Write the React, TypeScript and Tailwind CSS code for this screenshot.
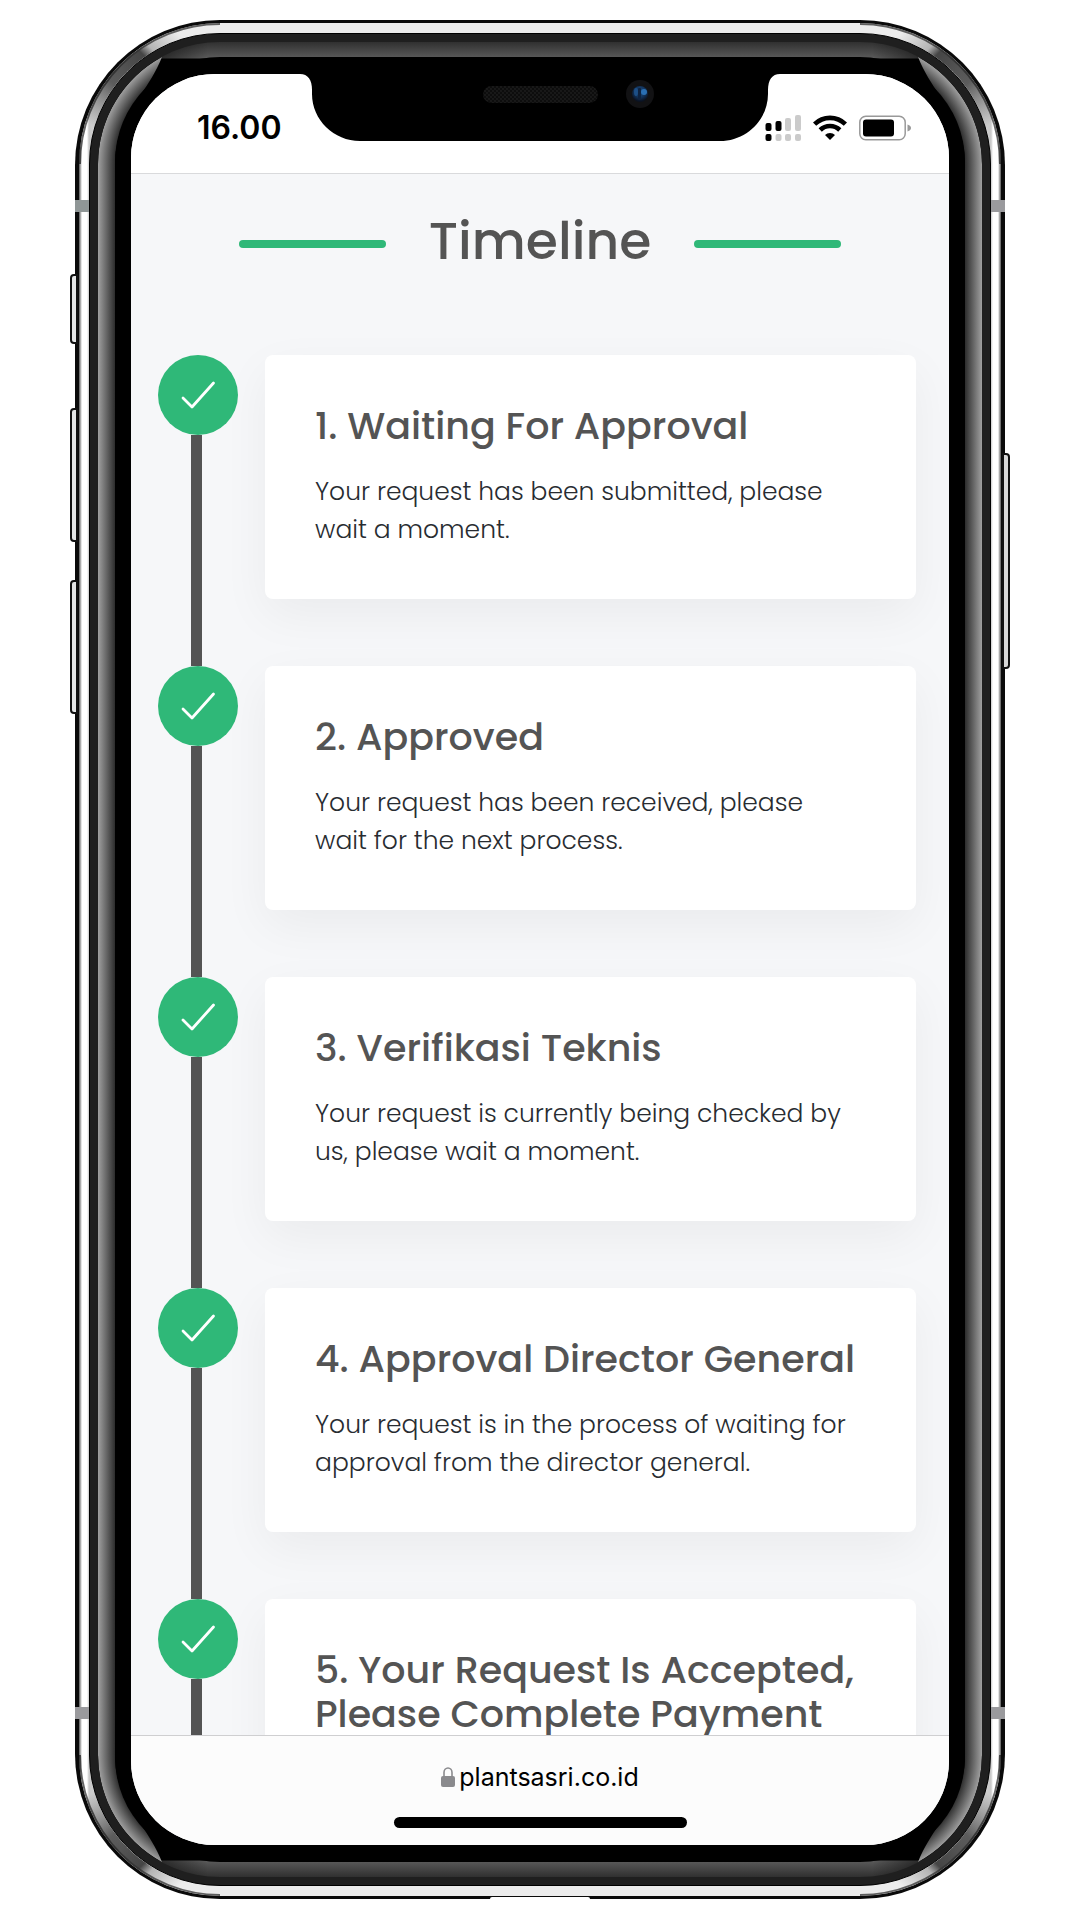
type Step = { title: string; body?: string };

const steps: Step[] = [
  { title: "1. Waiting For Approval", body: "Your request has been submitted, please wait a moment." },
  { title: "2. Approved", body: "Your request has been received, please wait for the next process." },
  { title: "3. Verifikasi Teknis", body: "Your request is currently being checked by us, please wait a moment." },
  { title: "4. Approval Director General", body: "Your request is in the process of waiting for approval from the director general." },
  { title: "5. Your Request Is Accepted, Please Complete Payment" },
];

const corners = [
  "left-0 top-0",
  "right-0 top-0 -scale-x-100",
  "left-0 bottom-0 -scale-y-100",
  "right-0 bottom-0 -scale-100",
];

function RimCorners() {
  return (
    <>
      {corners.map((c, i) => (
        <svg key={c} aria-hidden="true" className={`absolute ${c}`} width="141" height="141" viewBox="0 0 141 141" fill="none">
          <defs>
            <linearGradient id={`rim${i}`} gradientUnits="userSpaceOnUse" x1="8" y1="98" x2="98" y2="8">
              <stop offset="0" stopColor="#222" stopOpacity="0" />
              <stop offset="0.35" stopColor="#222" stopOpacity="0.7" />
              <stop offset="0.68" stopColor="#333" stopOpacity="0.9" />
              <stop offset="0.76" stopColor="#333" stopOpacity="0.3" />
              <stop offset="1" stopColor="#333" stopOpacity="0" />
            </linearGradient>
          </defs>
          <path d="M1 141A140 140 0 0 1 141 1" stroke="#000" strokeOpacity="0.6" strokeWidth="2" />
          <path d="M5 141A136 136 0 0 1 141 5" stroke={`url(#rim${i})`} strokeWidth="10" />
        </svg>
      ))}
    </>
  );
}

function GlassCorners() {
  return (
    <>
      {corners.map((c, i) => (
        <svg key={c} aria-hidden="true" className={`absolute ${c}`} width="122" height="122" viewBox="0 0 122 122">
          <defs>
            <radialGradient id={`glass${i}`} gradientUnits="userSpaceOnUse" cx="122" cy="122" r="122">
              <stop offset="0.86" stopColor="#2c2c2c" />
              <stop offset="1" stopColor="#a0a0a0" />
            </radialGradient>
          </defs>
          <path d="M0 122A122 122 0 0 1 64 15C58 30 50 42 42 54C26 74 17 97 17 122Z" fill={`url(#glass${i})`} />
        </svg>
      ))}
    </>
  );
}

function Notch() {
  return (
    <svg aria-hidden="true" className="absolute left-1/2 top-0 -translate-x-1/2" width="480" height="67" viewBox="0 0 480 67">
      <defs>
        <pattern id="mesh" width="4" height="4" patternUnits="userSpaceOnUse">
          <rect width="4" height="4" fill="#0d0d0d" />
          <circle cx="1" cy="1" r="0.9" fill="#1d1d1d" />
          <circle cx="3" cy="3" r="0.9" fill="#1d1d1d" />
        </pattern>
        <radialGradient id="lens" cx="0.5" cy="0.35" r="0.6">
          <stop offset="0" stopColor="#1d4f86" />
          <stop offset="0.6" stopColor="#123259" />
          <stop offset="1" stopColor="#0a1222" />
        </radialGradient>
      </defs>
      <path d="M0 0C8 0 12 6 12 16V20C12 46 34 67 60 67H420C446 67 468 46 468 20V16C468 6 472 0 480 0Z" fill="#000" />
      <rect x="183" y="12" width="115" height="17" rx="8.5" fill="url(#mesh)" />
      <circle cx="340" cy="20" r="14" fill="#121214" />
      <circle cx="340" cy="20" r="8" fill="url(#lens)" />
      <ellipse cx="336" cy="18" rx="2" ry="4" fill="#1d4f86" />
      <circle cx="344" cy="18" r="3" fill="#2a6fb3" />
      <rect x="338" y="14" width="3" height="12" rx="1" fill="#0f2340" />
    </svg>
  );
}

function StatusIcons() {
  return (
    <div className="flex items-center gap-3">
      <svg role="img" aria-label="Signal" width="36" height="26" viewBox="0 0 36 26">
        <g fill="#000">
          <rect x="0.5" y="8" width="6" height="8" rx="2" />
          <rect x="10.5" y="6" width="6" height="10" rx="2" />
          <rect x="0.5" y="19" width="6" height="7" rx="2" />
        </g>
        <g fill="#cbcbcb">
          <rect x="20" y="3" width="6" height="13" rx="2" />
          <rect x="30" y="0" width="6" height="16" rx="2" />
          <rect x="10.5" y="19" width="6" height="7" rx="2" />
          <rect x="20" y="19" width="6" height="7" rx="2" />
          <rect x="30" y="19" width="6" height="7" rx="2" />
        </g>
      </svg>
      <svg role="img" aria-label="Wi-Fi" width="34" height="26" viewBox="0 0 34 26" fill="none" stroke="#000" strokeWidth="4.6">
        <path d="M1.6 9.2A22 22 0 0 1 32.4 9.2" />
        <path d="M7.2 15A14 14 0 0 1 26.8 15" />
        <path d="M17 25L12 20A7 7 0 0 1 22 20Z" fill="#000" stroke="none" />
      </svg>
      <svg role="img" aria-label="Battery" width="52" height="26" viewBox="0 0 52 26">
        <rect x="0.8" y="1.3" width="45.4" height="23.4" rx="6" fill="#fff" stroke="#999" strokeWidth="1.5" />
        <rect x="4" y="4.5" width="31" height="17" rx="3" fill="#000" />
        <path d="M48.5 9.5C51 10.5 52 11.5 52 13S51 15.5 48.5 16.5Z" fill="#999" />
      </svg>
    </div>
  );
}

function TimelineStep({ step }: { step: Step }) {
  return (
    <li className="flex gap-[27px]">
      <div className="flex w-20 shrink-0 flex-col items-center">
        <svg role="img" aria-label="Completed" className="shrink-0" width="80" height="80" viewBox="0 0 80 80">
          <circle cx="40" cy="40" r="40" fill="#2fb878" />
          <path d="M25 43L34 52L55.5 28" fill="none" stroke="#fff" strokeWidth="2.8" strokeLinecap="round" strokeLinejoin="round" />
        </svg>
        <div className="mr-1 w-[11px] flex-1 bg-[#545454]" />
      </div>
      <div className="flex-1 pb-[67px]">
        <article className="min-h-[244px] rounded-lg bg-white px-[50px] py-[49px] shadow-[0_16px_48px_rgba(0,0,0,0.05)]">
          <h2 className="text-[38px] leading-[44px] font-medium text-[#545454]">{step.title}</h2>
          {step.body && <p className="mt-[25px] pr-3 text-[25px] leading-[38px] font-light text-[#282c31]">{step.body}</p>}
        </article>
      </div>
    </li>
  );
}

function Screen() {
  return (
    <div className="flex h-full flex-col overflow-hidden rounded-[84px] bg-[#f6f7f9]">
      <header className="relative flex h-[100px] shrink-0 items-center justify-between border-b border-[#d9dadc] bg-white pt-2 pr-[38px] pl-[66px]">
        <time className="font-['Inter',sans-serif] text-[32px] font-semibold text-black">16.00</time>
        <Notch />
        <StatusIcons />
      </header>
      <main className="min-h-0 flex-1 overflow-hidden font-['Poppins','Inter',sans-serif]">
        <div className="flex items-center justify-center gap-[43px] pt-[37px] pb-[78px]">
          <span className="h-2 w-[147px] rounded-full bg-[#2fb878]" />
          <h1 className="pb-[6px] text-[52px] leading-[60px] font-medium text-[#545454]">Timeline</h1>
          <span className="h-2 w-[147px] rounded-full bg-[#2fb878]" />
        </div>
        <ol className="pr-[33px] pl-[27px]">
          {steps.map((s) => (
            <TimelineStep key={s.title} step={s} />
          ))}
        </ol>
      </main>
      <footer className="flex shrink-0 flex-col items-center border-t border-[#cfcfd1] bg-[#fcfcfc] pt-5 pb-[17px]">
        <a href="#" className="flex items-center gap-1 font-['Inter',sans-serif] text-[25px] leading-[42px] text-black">
          <svg aria-hidden="true" width="14" height="20" viewBox="0 0 14 20">
            <path d="M3 10V5.5A4 4.5 0 0 1 11 5.5V10" fill="none" stroke="#8a8a8d" strokeWidth="1.6" />
            <rect y="9" width="14" height="11" rx="2" fill="#8a8a8d" />
          </svg>
          plantsasri.co.id
        </a>
        <div className="mt-[19px] h-[11px] w-[293px] rounded-full bg-black" />
      </footer>
    </div>
  );
}

export default function App() {
  return (
    <div className="h-screen bg-white px-[75px] pt-5 pb-[21px]">
      <div className="relative h-full rounded-[145px] bg-[#0a0a0a] px-1 py-[3px]">
        {/* metal rim */}
        <div className="relative h-full overflow-hidden rounded-[141px] bg-[linear-gradient(to_right,#555_0,#fff_3px,#fff_8px,#c9c9c9_10px,#ececec_40px,#ececec_calc(100%_-_40px),#c9c9c9_calc(100%_-_10px),#fff_calc(100%_-_8px),#fff_calc(100%_-_3px),#555_100%)] p-[10px]">
          <RimCorners />
          <div className="relative h-full rounded-[131px] border border-black bg-[#1f1f1f] p-2">
            {/* glass edge */}
            <div className="relative h-full overflow-hidden rounded-[122px] bg-[linear-gradient(to_right,#000_20px,transparent_110px,transparent_calc(100%_-_110px),#000_calc(100%_-_20px)),linear-gradient(to_bottom,#303030_0,#5a5a5a_16px,#000_17px,#000_calc(100%_-_17px),#5a5a5a_calc(100%_-_16px),#303030_100%)]">
              <div className="absolute inset-x-0 inset-y-[122px] bg-[linear-gradient(to_right,#a0a0a0_0,#2c2c2c_17px,#000_18px,#000_calc(100%_-_18px),#2c2c2c_calc(100%_-_17px),#a0a0a0_100%)]" />
              <GlassCorners />
              <div className="relative h-full px-[17px] py-[15px]">
                <div className="h-full rounded-[105px] bg-black px-4 py-[17px]">
                  <Screen />
                </div>
              </div>
            </div>
          </div>
        </div>
        {/* antenna bands */}
        <span className="absolute top-[180px] left-0 h-3 w-[14px] bg-[#8f9696]" />
        <span className="absolute top-[180px] right-0 h-3 w-[14px] bg-[#9a9a9d]" />
        <span className="absolute bottom-[180px] left-0 h-3 w-[14px] bg-[#9a9a9d]" />
        <span className="absolute right-0 bottom-[180px] h-3 w-[14px] bg-[#9a9a9d]" />
        {/* side buttons */}
        <span className="absolute top-[254px] -left-[5px] h-[70px] w-2 rounded-l-sm border-2 border-[#111] bg-[#e4e6e6]" />
        <span className="absolute top-[388px] -left-[5px] h-[134px] w-2 rounded-l-sm border-2 border-[#111] bg-[#e4e6e6]" />
        <span className="absolute top-[560px] -left-[5px] h-[134px] w-2 rounded-l-sm border-2 border-[#111] bg-[#e4e6e6]" />
        <span className="absolute top-[433px] -right-[5px] h-[216px] w-2 rounded-r-sm border-2 border-[#111] bg-[#d8d8d8]" />
        <span className="absolute bottom-0 left-1/2 h-[2px] w-[100px] -translate-x-1/2 rounded-t-full bg-white" />
      </div>
    </div>
  );
}
